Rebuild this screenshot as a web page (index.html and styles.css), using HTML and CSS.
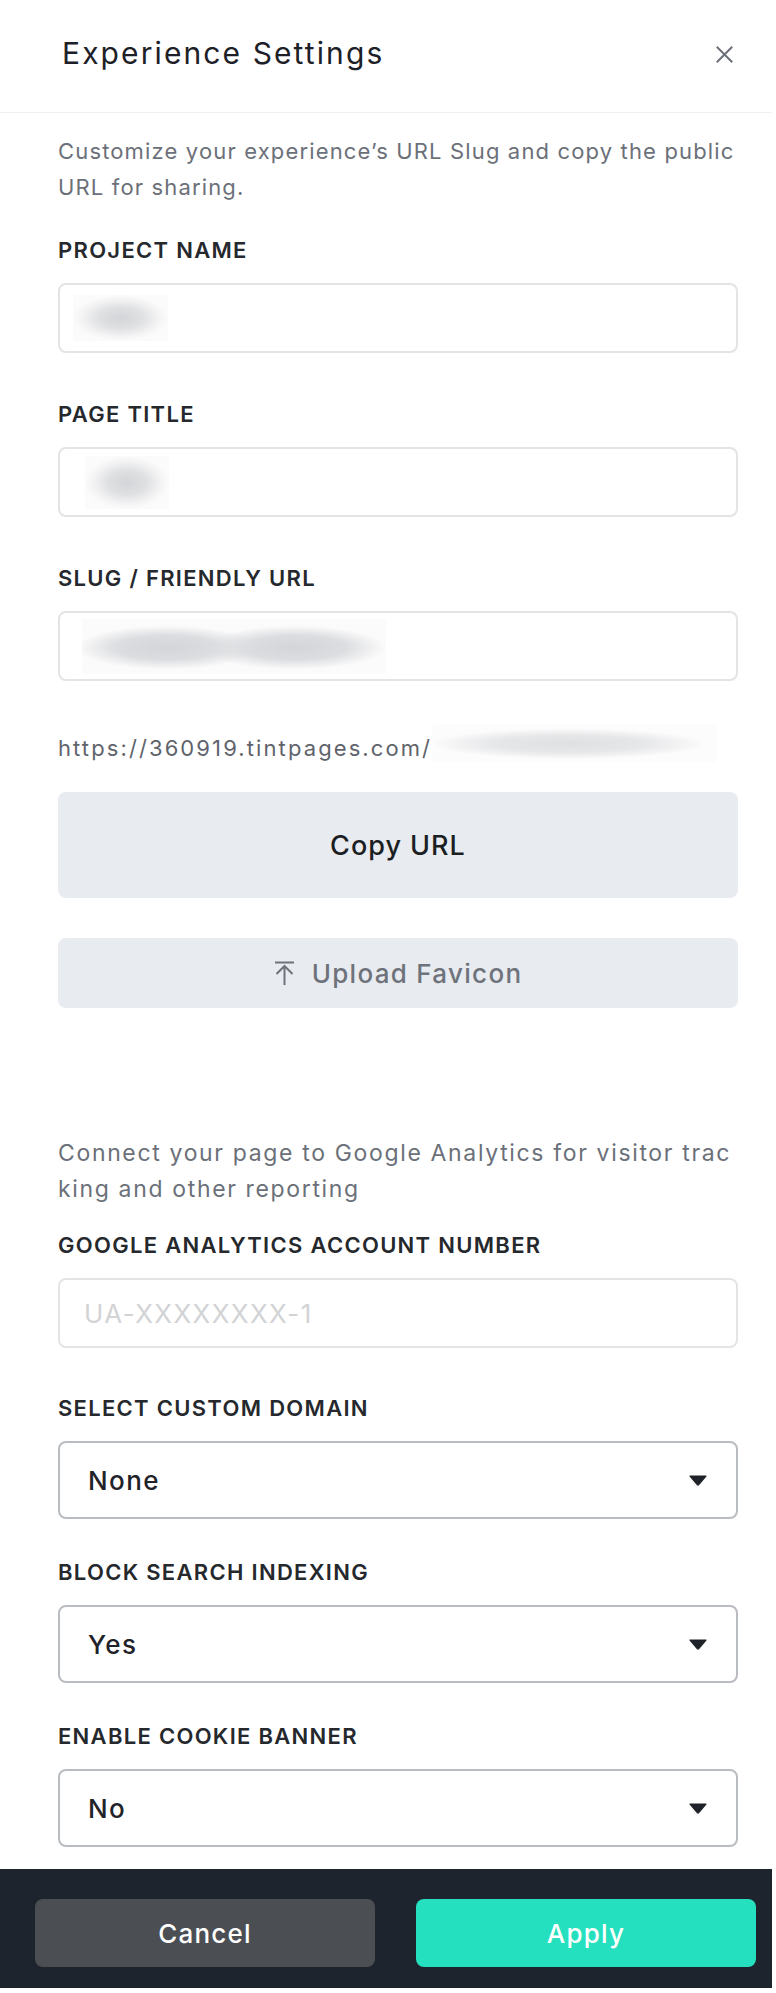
FILE: index.html
```html
<!DOCTYPE html>
<html lang="en">
<head>
<meta charset="utf-8">
<title>Experience Settings</title>
<link rel="stylesheet" href="styles.css">
</head>
<body>
<div class="panel">
  <header class="header">
    <h1 class="title">Experience Settings</h1>
    <button class="close" aria-label="Close">
      <svg width="17" height="17" viewBox="0 0 17 17"><path d="M1.5 1.5 L15.5 15.5 M15.5 1.5 L1.5 15.5" stroke="#6b7079" stroke-width="2" fill="none" stroke-linecap="square"/></svg>
    </button>
  </header>

  <main class="content">
    <p class="desc desc-top">Customize your experience’s URL Slug and copy the public URL for sharing.</p>

    <div class="field field-text">
      <label class="label">PROJECT NAME</label>
      <div class="input"><span class="blur blur-name"></span></div>
    </div>

    <div class="field field-text">
      <label class="label">PAGE TITLE</label>
      <div class="input"><span class="blur blur-title"></span></div>
    </div>

    <div class="field field-slug">
      <label class="label">SLUG / FRIENDLY URL</label>
      <div class="input"><span class="blur blur-slug"></span></div>
    </div>

    <div class="url-row">
      <span class="url-text">https://360919.tintpages.com/</span>
      <span class="blur blur-url"></span>
    </div>

    <button class="btn btn-copy">Copy URL</button>

    <button class="btn btn-upload">
      <svg class="upload-icon" width="21" height="25" viewBox="0 0 21 25"><path d="M1 1.5 H20 M10.5 5 V24 M2.5 13 L10.5 5 L18.5 13" stroke="#6e737b" stroke-width="2" fill="none"/></svg>
      <span>Upload Favicon</span>
    </button>

    <p class="desc desc-ga">Connect your page to Google Analytics for visitor trac<br>king and other reporting</p>

    <div class="field field-ga">
      <label class="label">GOOGLE ANALYTICS ACCOUNT NUMBER</label>
      <div class="input"><span class="placeholder">UA-XXXXXXXX-1</span></div>
    </div>

    <div class="field field-select">
      <label class="label">SELECT CUSTOM DOMAIN</label>
      <div class="select"><span class="select-value">None</span><svg class="caret" width="18" height="11" viewBox="0 0 18 11"><path d="M1 1 H17 L9.8 9.6 Q9 10.5 8.2 9.6 Z" fill="#1f2329" stroke="#1f2329" stroke-width="1.2" stroke-linejoin="round"/></svg></div>
    </div>

    <div class="field field-select">
      <label class="label">BLOCK SEARCH INDEXING</label>
      <div class="select"><span class="select-value">Yes</span><svg class="caret" width="18" height="11" viewBox="0 0 18 11"><path d="M1 1 H17 L9.8 9.6 Q9 10.5 8.2 9.6 Z" fill="#1f2329" stroke="#1f2329" stroke-width="1.2" stroke-linejoin="round"/></svg></div>
    </div>

    <div class="field field-select field-last">
      <label class="label">ENABLE COOKIE BANNER</label>
      <div class="select"><span class="select-value">No</span><svg class="caret" width="18" height="11" viewBox="0 0 18 11"><path d="M1 1 H17 L9.8 9.6 Q9 10.5 8.2 9.6 Z" fill="#1f2329" stroke="#1f2329" stroke-width="1.2" stroke-linejoin="round"/></svg></div>
    </div>
  </main>

  <footer class="footer">
    <button class="fbtn fbtn-cancel">Cancel</button>
    <button class="fbtn fbtn-apply">Apply</button>
  </footer>
</div>
</body>
</html>
```

FILE: styles.css
```css
* { box-sizing: border-box; }

body {
  margin: 0;
  background: #ffffff;
  font-family: Inter, Lato, "Liberation Sans", sans-serif;
}

.panel {
  width: 772px;
}

.header {
  height: 113px;
  border-bottom: 1px solid #eff0f2;
  display: flex;
  align-items: center;
  justify-content: space-between;
  padding: 0 39px 6px 62px;
}

.title {
  margin: 0;
  font-size: 30px;
  font-weight: 400;
  line-height: 36px;
  letter-spacing: 2.1px;
  color: #1d2127;
}

.close {
  margin-top: 3px;
  width: 17px;
  height: 17px;
  padding: 0;
  border: 0;
  background: none;
  display: block;
}
.close svg { display: block; }

.content {
  padding: 20px 34px 0 58px;
}

.desc {
  margin: 0;
  font-size: 22px;
  line-height: 36px;
  color: #6b7079;
}
.desc-top { margin-bottom: 31px; letter-spacing: 1.15px; }
.desc-ga { margin-bottom: 24px; font-size: 23px; letter-spacing: 1.65px; }

.label {
  display: block;
  font-size: 22px;
  line-height: 24px;
  font-weight: 600;
  letter-spacing: 1.3px;
  color: #25282c;
  padding-top: 2px;
  margin-bottom: 21px;
}

.field-text { margin-bottom: 47px; }
.field-slug { margin-bottom: 43px; }
.field-ga { margin-bottom: 46px; }
.field-select { margin-bottom: 39px; }
.field-select.field-last { margin-bottom: 22px; }

.input {
  height: 70px;
  border: 2px solid #e3e4e6;
  border-radius: 8px;
  display: flex;
  align-items: center;
  padding-left: 13px;
  background: #fff;
}

.blur {
  display: block;
  background: radial-gradient(ellipse closest-side at 50% 50%, #d3d5d8 0%, #dfe0e2 45%, #f3f3f4 80%, #fbfbfb 100%);
  border-radius: 2px;
}
.blur-name { width: 95px; height: 46px; }
.blur-title { width: 84px; height: 53px; margin-left: 12px; }
.blur-slug {
  width: 304px; height: 55px; margin-left: 9px;
  background:
    radial-gradient(ellipse 30% 40% at 28% 52%, #d3d5d8 0%, #dcdde0 55%, rgba(251,251,251,0) 100%),
    radial-gradient(ellipse 30% 40% at 70% 52%, #d3d5d8 0%, #dcdde0 55%, rgba(251,251,251,0) 100%),
    #fbfbfb;
}

.url-row {
  display: flex;
  align-items: flex-start;
  height: 38px;
  margin-bottom: 30px;
}
.url-text {
  font-size: 22px;
  line-height: 36px;
  letter-spacing: 2.1px;
  color: #5f636b;
  margin-top: 6px;
}
.blur-url {
  width: 285px;
  height: 38px;
  margin-left: 0;
  background: radial-gradient(ellipse 48% 40% at 48% 52%, #dfe0e2 0%, #e6e7e9 55%, #f4f4f5 85%, #fcfcfc 100%);
}

.btn {
  width: 100%;
  display: flex;
  align-items: center;
  justify-content: center;
  border: 0;
  border-radius: 8px;
  background: #e8ebef;
  font-family: Inter, Lato, "Liberation Sans", sans-serif;
  padding: 0;
}

.btn-copy {
  height: 106px;
  font-size: 27px;
  font-weight: 500;
  letter-spacing: 1px;
  color: #1b1e22;
  margin-bottom: 40px;
}

.btn-upload {
  height: 70px;
  font-size: 26px;
  font-weight: 500;
  letter-spacing: 1.3px;
  color: #6e737b;
  gap: 17px;
  margin-bottom: 127px;
}
.upload-icon { display: block; }

.placeholder {
  font-size: 26px;
  letter-spacing: 1.4px;
  color: #d2d3d5;
  margin-left: 11px;
}

.select {
  height: 78px;
  border: 2px solid #b9bcc1;
  border-radius: 8px;
  display: flex;
  align-items: center;
  justify-content: space-between;
  padding: 0 29px 0 28px;
}
.select-value {
  font-size: 26px;
  font-weight: 500;
  letter-spacing: 1.4px;
  color: #1f2329;
}
.caret { display: block; }

.footer {
  height: 119px;
  background: #1e242d;
  display: grid;
  grid-template-columns: 1fr 1fr;
  column-gap: 41px;
  padding: 30px 16px 21px 35px;
}

.fbtn {
  height: 68px;
  border: 0;
  border-radius: 8px;
  font-family: Inter, Lato, "Liberation Sans", sans-serif;
  font-size: 26px;
  font-weight: 500;
  letter-spacing: 1.2px;
  color: #ffffff;
}
.fbtn-cancel { background: #4b4f54; }
.fbtn-apply { background: #25e0be; }
```
